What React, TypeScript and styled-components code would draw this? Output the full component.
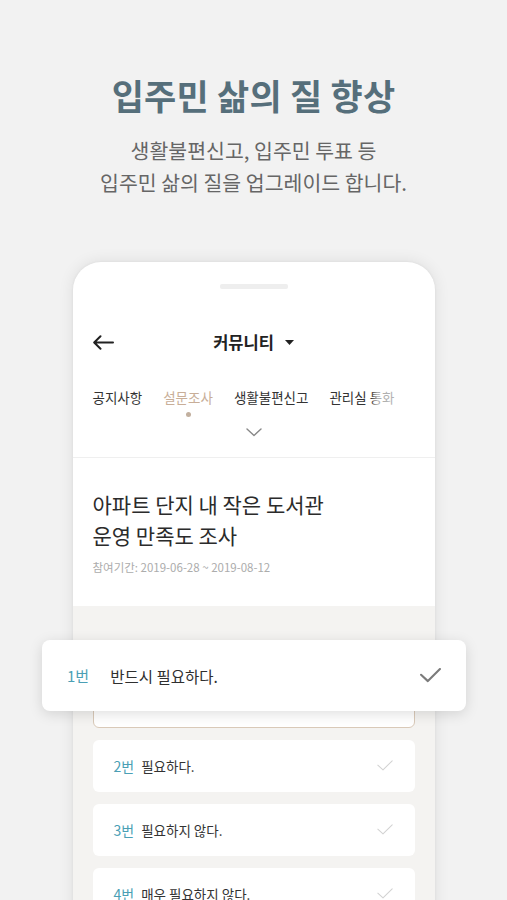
import styled, { createGlobalStyle } from 'styled-components';

const GlobalStyle = createGlobalStyle`
  html, body {
    margin: 0;
    padding: 0;
    background: #f2f2f2;
  }
  body {
    font-family: 'Noto Sans CJK KR', 'Noto Sans', sans-serif;
  }
`;

const options = [
  { no: '2번', label: '필요하다.' },
  { no: '3번', label: '필요하지 않다.' },
  { no: '4번', label: '매우 필요하지 않다.' },
];

const tabs = ['공지사항', '설문조사', '생활불편신고', '관리실 통화'];

const CheckIcon = ({ size, color, stroke }: { size: number; color: string; stroke: number }) => (
  <svg width={size} height={size * 0.7} viewBox="0 0 20 14" fill="none">
    <path d="M1 6.5L7.5 12.5L19 1" stroke={color} strokeWidth={stroke} strokeLinecap="round" strokeLinejoin="round" />
  </svg>
);

const App = () => {
  return (
    <Page>
      <GlobalStyle />
      <Intro>
        <Title>입주민 삶의 질 향상</Title>
        <Subtitle>
          생활불편신고, 입주민 투표 등
          <br />
          입주민 삶의 질을 업그레이드 합니다.
        </Subtitle>
      </Intro>

      <Phone>
        <Notch />
        <NavBar>
          <BackButton>
            <svg width="21" height="15" viewBox="0 0 21 15" fill="none">
              <path d="M20 7.5H1.5M7.5 1.2L1.2 7.5L7.5 13.8" stroke="#222" strokeWidth="2" strokeLinecap="round" strokeLinejoin="round" />
            </svg>
          </BackButton>
          <NavTitle>
            커뮤니티
            <svg width="9" height="5" viewBox="0 0 9 5">
              <path d="M0 0H9L4.5 5Z" fill="#222" />
            </svg>
          </NavTitle>
        </NavBar>
        <TabStrip>
          {tabs.map((t, i) => (
            <Tab key={t} $active={i === 1}>
              {t}
            </Tab>
          ))}
        </TabStrip>
        <ExpandRow>
          <svg width="16" height="9" viewBox="0 0 16 9" fill="none">
            <path d="M1 1L8 7.5L15 1" stroke="#888" strokeWidth="1.4" strokeLinecap="round" strokeLinejoin="round" />
          </svg>
        </ExpandRow>

        <Survey>
          <SurveyTitle>
            아파트 단지 내 작은 도서관
            <br />
            운영 만족도 조사
          </SurveyTitle>
          <Period>참여기간: 2019-06-28 ~ 2019-08-12</Period>
        </Survey>

        <Answers>
          <Option $selected>
            <OptionNo>1번</OptionNo>
            <OptionLabel>반드시 필요하다.</OptionLabel>
          </Option>
          {options.map((o) => (
            <Option key={o.no}>
              <OptionNo>{o.no}</OptionNo>
              <OptionLabel>{o.label}</OptionLabel>
              <CheckIcon size={16} color="#d2d2d2" stroke={1.3} />
            </Option>
          ))}
        </Answers>
      </Phone>

      <Popup>
        <PopupNo>1번</PopupNo>
        <PopupLabel>반드시 필요하다.</PopupLabel>
        <CheckIcon size={21} color="#7b7b7b" stroke={2} />
      </Popup>
    </Page>
  );
};

const Page = styled.div`
  position: relative;
  height: 900px;
  overflow: hidden;
`;

const Intro = styled.div`
  display: flex;
  flex-direction: column;
  align-items: center;
  padding-top: 71px;
`;

const Title = styled.h1`
  margin: 0;
  font-size: 35px;
  line-height: 48px;
  font-weight: 700;
  color: #566f7b;
  letter-spacing: 0.2px;
`;

const Subtitle = styled.p`
  margin: 15px 0 0;
  font-size: 20.5px;
  line-height: 32px;
  color: #666;
  text-align: center;
`;

const Phone = styled.div`
  box-sizing: border-box;
  width: 362px;
  height: 700px;
  margin: 64px auto 0;
  background: #fff;
  border-radius: 28px 28px 0 0;
  box-shadow: 0 0 3px rgba(0, 0, 0, 0.06), 0 0 16px rgba(0, 0, 0, 0.09);
  overflow: hidden;
  display: flex;
  flex-direction: column;
`;

const Notch = styled.div`
  align-self: center;
  width: 68px;
  height: 5px;
  margin-top: 22px;
  background: #eeeeee;
  border-radius: 2px;
`;

const NavBar = styled.div`
  position: relative;
  display: flex;
  align-items: center;
  justify-content: center;
  height: 44px;
  margin-top: 31px;
  padding: 0 20px;
`;

const BackButton = styled.div`
  position: absolute;
  left: 20px;
  top: 15px;
  display: flex;
`;

const NavTitle = styled.div`
  display: flex;
  align-items: center;
  gap: 11px;
  font-size: 16.5px;
  font-weight: 700;
  color: #222;
`;

const TabStrip = styled.div`
  position: relative;
  display: flex;
  gap: 21px;
  height: 20px;
  margin-top: 23px;
  padding: 0 20px;
  white-space: nowrap;
  overflow: hidden;

  &::after {
    content: '';
    position: absolute;
    top: 0;
    right: 0;
    width: 64px;
    height: 100%;
    background: linear-gradient(to right, rgba(255, 255, 255, 0), rgba(255, 255, 255, 0.6) 10%, rgba(255, 255, 255, 0.7));
  }
`;

const Tab = styled.div<{ $active?: boolean }>`
  position: relative;
  font-size: 13.5px;
  line-height: 20px;
  color: ${(p) => (p.$active ? '#c8ae98' : '#333')};
`;

const ExpandRow = styled.div`
  display: flex;
  justify-content: center;
  align-items: center;
  height: 50px;
  border-bottom: 1px solid #efefef;
  position: relative;

  &::before {
    content: '';
    position: absolute;
    left: 113px;
    top: 5px;
    width: 5px;
    height: 5px;
    border-radius: 50%;
    background: #c2b09f;
  }
`;

const Survey = styled.div`
  padding: 31px 20px 30px;
`;

const SurveyTitle = styled.h2`
  margin: 0;
  font-size: 21px;
  line-height: 31px;
  font-weight: 400;
  color: #2b2b2b;
`;

const Period = styled.div`
  margin-top: 7px;
  font-size: 11.5px;
  line-height: 18px;
  color: #acacac;
`;

const Answers = styled.div`
  flex: 1;
  display: flex;
  flex-direction: column;
  gap: 12px;
  padding: 70px 20px 0;
  background: #f4f3f1;
`;

const Option = styled.div<{ $selected?: boolean }>`
  box-sizing: border-box;
  display: flex;
  align-items: center;
  height: 52px;
  padding: 0 21px 0 20px;
  background: #fff;
  border-radius: 6px;
  border: 1px solid ${(p) => (p.$selected ? '#d9c9b8' : 'transparent')};
`;

const OptionNo = styled.span`
  font-size: 14px;
  color: #4b9fb5;
  margin-right: 7px;
`;

const OptionLabel = styled.span`
  flex: 1;
  font-size: 13.5px;
  color: #333;
`;

const Popup = styled.div`
  position: absolute;
  left: 42px;
  top: 640px;
  box-sizing: border-box;
  display: flex;
  align-items: center;
  width: 424px;
  height: 71px;
  padding: 0 25px;
  background: #fff;
  border-radius: 8px;
  box-shadow: 0 3px 14px rgba(0, 0, 0, 0.13);
`;

const PopupNo = styled.span`
  font-size: 15px;
  color: #4b9fb5;
  margin-right: 21px;
`;

const PopupLabel = styled.span`
  flex: 1;
  font-size: 15.5px;
  color: #2f2f2f;
`;

export default App;
